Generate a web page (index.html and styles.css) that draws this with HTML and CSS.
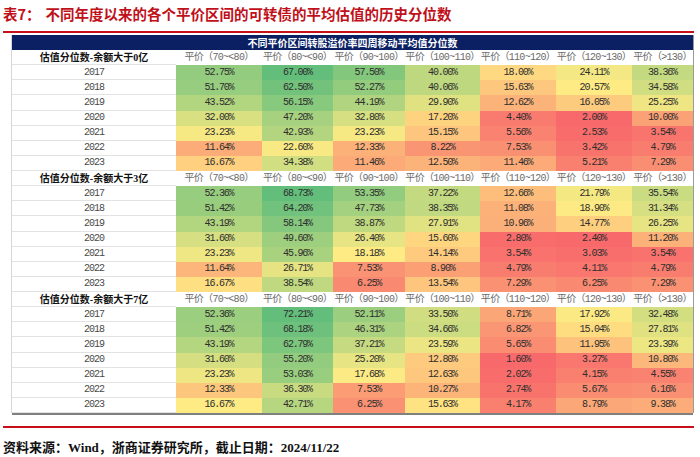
FILE: index.html
```html
<!DOCTYPE html>
<html lang="zh-CN">
<head>
<meta charset="utf-8">
<title>表7</title>
<link rel="stylesheet" href="styles.css">
</head>
<body>
<div class="page">
  <h1 class="title"><span class="no">表7：</span>不同年度以来的各个平价区间的可转债的平均估值的历史分位数</h1>
  <div class="rule"></div>
  <table class="sheet">
    <colgroup>
      <col class="c-label"><col class="c-a"><col class="c-b"><col class="c-c"><col class="c-d"><col class="c-e"><col class="c-f"><col class="c-g">
    </colgroup>
    <thead>
      <tr class="banner"><th colspan="8">不同平价区间转股溢价率四周移动平均值分位数</th></tr>
    </thead>
    <tbody class="section">
      <tr class="head"><th class="label">估值分位数-余额大于0亿</th><th>平价（70~&lt;80）</th><th>平价（80~&lt;90）</th><th>平价（90~100）</th><th>平价（100~110）</th><th>平价（110~120）</th><th>平价（120~130）</th><th>平价（&gt;130）</th></tr>
      <tr><td class="year">2017</td><td class="v">52.75%</td><td class="v">67.00%</td><td class="v">57.50%</td><td class="v">40.00%</td><td class="v">18.00%</td><td class="v">24.11%</td><td class="v">38.36%</td></tr>
      <tr><td class="year">2018</td><td class="v">51.70%</td><td class="v">62.50%</td><td class="v">52.27%</td><td class="v">40.06%</td><td class="v">15.63%</td><td class="v">20.57%</td><td class="v">34.58%</td></tr>
      <tr><td class="year">2019</td><td class="v">43.52%</td><td class="v">56.15%</td><td class="v">44.19%</td><td class="v">29.90%</td><td class="v">12.62%</td><td class="v">16.05%</td><td class="v">25.25%</td></tr>
      <tr><td class="year">2020</td><td class="v">32.00%</td><td class="v">47.20%</td><td class="v">32.80%</td><td class="v">17.20%</td><td class="v">4.40%</td><td class="v">2.00%</td><td class="v">10.00%</td></tr>
      <tr><td class="year">2021</td><td class="v">23.23%</td><td class="v">42.93%</td><td class="v">23.23%</td><td class="v">15.15%</td><td class="v">5.56%</td><td class="v">2.53%</td><td class="v">3.54%</td></tr>
      <tr><td class="year">2022</td><td class="v">11.64%</td><td class="v">22.60%</td><td class="v">12.33%</td><td class="v">8.22%</td><td class="v">7.53%</td><td class="v">3.42%</td><td class="v">4.79%</td></tr>
      <tr><td class="year">2023</td><td class="v">16.67%</td><td class="v">34.38%</td><td class="v">11.46%</td><td class="v">12.50%</td><td class="v">11.46%</td><td class="v">5.21%</td><td class="v">7.29%</td></tr>
    </tbody>
    <tbody class="section">
      <tr class="head"><th class="label">估值分位数-余额大于3亿</th><th>平价（70~&lt;80）</th><th>平价（80~&lt;90）</th><th>平价（90~100）</th><th>平价（100~110）</th><th>平价（110~120）</th><th>平价（120~130）</th><th>平价（&gt;130）</th></tr>
      <tr><td class="year">2017</td><td class="v">52.36%</td><td class="v">68.73%</td><td class="v">53.35%</td><td class="v">37.22%</td><td class="v">12.66%</td><td class="v">21.79%</td><td class="v">35.54%</td></tr>
      <tr><td class="year">2018</td><td class="v">51.42%</td><td class="v">64.20%</td><td class="v">47.73%</td><td class="v">38.35%</td><td class="v">11.08%</td><td class="v">18.90%</td><td class="v">31.34%</td></tr>
      <tr><td class="year">2019</td><td class="v">43.19%</td><td class="v">58.14%</td><td class="v">38.87%</td><td class="v">27.91%</td><td class="v">10.96%</td><td class="v">14.77%</td><td class="v">26.25%</td></tr>
      <tr><td class="year">2020</td><td class="v">31.60%</td><td class="v">49.60%</td><td class="v">26.40%</td><td class="v">15.60%</td><td class="v">2.80%</td><td class="v">2.40%</td><td class="v">11.20%</td></tr>
      <tr><td class="year">2021</td><td class="v">23.23%</td><td class="v">45.96%</td><td class="v">18.18%</td><td class="v">14.14%</td><td class="v">3.54%</td><td class="v">3.03%</td><td class="v">3.54%</td></tr>
      <tr><td class="year">2022</td><td class="v">11.64%</td><td class="v">26.71%</td><td class="v">7.53%</td><td class="v">8.90%</td><td class="v">4.79%</td><td class="v">4.11%</td><td class="v">4.79%</td></tr>
      <tr><td class="year">2023</td><td class="v">16.67%</td><td class="v">38.54%</td><td class="v">6.25%</td><td class="v">13.54%</td><td class="v">7.29%</td><td class="v">6.25%</td><td class="v">7.29%</td></tr>
    </tbody>
    <tbody class="section">
      <tr class="head"><th class="label">估值分位数-余额大于7亿</th><th>平价（70~&lt;80）</th><th>平价（80~&lt;90）</th><th>平价（90~100）</th><th>平价（100~110）</th><th>平价（110~120）</th><th>平价（120~130）</th><th>平价（&gt;130）</th></tr>
      <tr><td class="year">2017</td><td class="v">52.36%</td><td class="v">72.21%</td><td class="v">52.11%</td><td class="v">33.50%</td><td class="v">8.71%</td><td class="v">17.92%</td><td class="v">32.48%</td></tr>
      <tr><td class="year">2018</td><td class="v">51.42%</td><td class="v">68.18%</td><td class="v">46.31%</td><td class="v">34.66%</td><td class="v">6.82%</td><td class="v">15.04%</td><td class="v">27.81%</td></tr>
      <tr><td class="year">2019</td><td class="v">43.19%</td><td class="v">62.79%</td><td class="v">37.21%</td><td class="v">23.59%</td><td class="v">5.65%</td><td class="v">11.95%</td><td class="v">23.39%</td></tr>
      <tr><td class="year">2020</td><td class="v">31.60%</td><td class="v">55.20%</td><td class="v">25.20%</td><td class="v">12.80%</td><td class="v">1.60%</td><td class="v">3.27%</td><td class="v">10.80%</td></tr>
      <tr><td class="year">2021</td><td class="v">23.23%</td><td class="v">53.03%</td><td class="v">17.68%</td><td class="v">12.63%</td><td class="v">2.02%</td><td class="v">4.15%</td><td class="v">4.55%</td></tr>
      <tr><td class="year">2022</td><td class="v">12.33%</td><td class="v">36.30%</td><td class="v">7.53%</td><td class="v">10.27%</td><td class="v">2.74%</td><td class="v">5.67%</td><td class="v">6.16%</td></tr>
      <tr><td class="year">2023</td><td class="v">16.67%</td><td class="v">42.71%</td><td class="v">6.25%</td><td class="v">15.63%</td><td class="v">4.17%</td><td class="v">8.79%</td><td class="v">9.38%</td></tr>
    </tbody>
  </table>
  <div class="rule foot-rule"></div>
  <p class="source">资料来源：Wind，浙商证券研究所，截止日期：2024/11/22</p>
</div>
<script src="script.js"></script>
</body>
</html>
```

FILE: styles.css
```css
* { box-sizing: border-box; }
html, body { margin: 0; padding: 0; background: #fff; }
body {
  width: 700px;
  height: 457px;
  overflow: hidden;
  font-family: "Liberation Serif", "Noto Sans CJK SC", serif;
}
.page { width: 700px; }

.title {
  margin: 0;
  height: 31px;
  padding: 5px 0 0 3px;
  font-family: "Noto Sans CJK SC", sans-serif;
  font-size: 14.5px;
  line-height: 18px;
  font-weight: 700;
  color: #c0101a;
  white-space: nowrap;
}
.title .no { margin-right: 5px; }

.rule {
  height: 2px;
  margin: 0 6px 0 3px;
  background: #c8101a;
}

.sheet {
  margin: 2px 0 0 12px;
  width: 681px;
  table-layout: fixed;
  border-collapse: separate;
  border-spacing: 0;
  box-shadow: 0 2px 0 #808080, 1px 0 0 #9a9a9a, -1px 0 0 #d6d6d6;
}
.c-label { width: 164px; }
.c-a { width: 86px; }
.c-b { width: 71px; }
.c-c { width: 72px; }
.c-d { width: 75px; }
.c-e { width: 76px; }
.c-f { width: 76px; }
.c-g { width: 61px; }

.sheet th, .sheet td {
  padding: 0;
  text-align: center;
  vertical-align: middle;
  white-space: nowrap;
  overflow: hidden;
}

.banner th {
  height: 15px;
  background: #0a2062;
  color: #fff;
  font-family: "Noto Sans CJK SC", sans-serif;
  font-size: 10px;
  line-height: 14px;
  font-weight: 700;
}

.section tr { height: 15.125px; }

.head th {
  background: #fff;
  color: #6a6a6a;
  font-family: "Liberation Mono", "Noto Sans CJK SC", monospace;
  font-size: 10px;
  line-height: 14px;
  font-weight: 400;
  letter-spacing: -0.7px;
}
.head th.label {
  color: #111;
  font-family: "Liberation Serif", "Noto Sans CJK SC", serif;
  font-size: 10px;
  font-weight: 700;
  letter-spacing: 0;
  box-shadow: inset 0 -1px 0 #e2e2e2;
}

.year {
  background: #fff;
  color: #4a4a4a;
  font-family: "Liberation Mono", monospace;
  font-size: 10px;
  line-height: 14px;
  letter-spacing: -1px;
  box-shadow: inset 0 -1px 0 #e2e2e2;
}

.v {
  color: #2e2e2e;
  font-family: "Liberation Mono", monospace;
  font-size: 10px;
  line-height: 14px;
  letter-spacing: -1.2px;
}

.foot-rule { margin-top: 13px; height: 1.5px; }

.source {
  margin: 12px 0 0 3px;
  font-family: "Liberation Serif", "Noto Sans CJK SC", serif;
  font-size: 13px;
  line-height: 16px;
  font-weight: 700;
  color: #111;
  white-space: nowrap;
}
```

FILE: script.js
```js
(function () {
  var RED = [248, 105, 107], YEL = [255, 235, 132], GRN = [99, 190, 123];
  function mix(a, b, t) {
    return a.map(function (x, k) { return Math.round(x + (b[k] - x) * t); });
  }
  document.querySelectorAll('tbody.section').forEach(function (sec) {
    var cells = Array.prototype.slice.call(sec.querySelectorAll('td.v'));
    var vals = cells.map(function (c) { return parseFloat(c.textContent); });
    var s = vals.slice().sort(function (a, b) { return a - b; });
    var min = s[0], max = s[s.length - 1];
    var pos = (s.length - 1) * 0.5, lo = Math.floor(pos), hi = Math.ceil(pos);
    var mid = s[lo] + (s[hi] - s[lo]) * (pos - lo);
    cells.forEach(function (c, i) {
      var v = vals[i], col;
      if (v <= mid) col = mix(RED, YEL, (v - min) / (mid - min));
      else col = mix(YEL, GRN, (v - mid) / (max - mid));
      c.style.backgroundColor = 'rgb(' + col.join(',') + ')';
    });
  });
})();
```
